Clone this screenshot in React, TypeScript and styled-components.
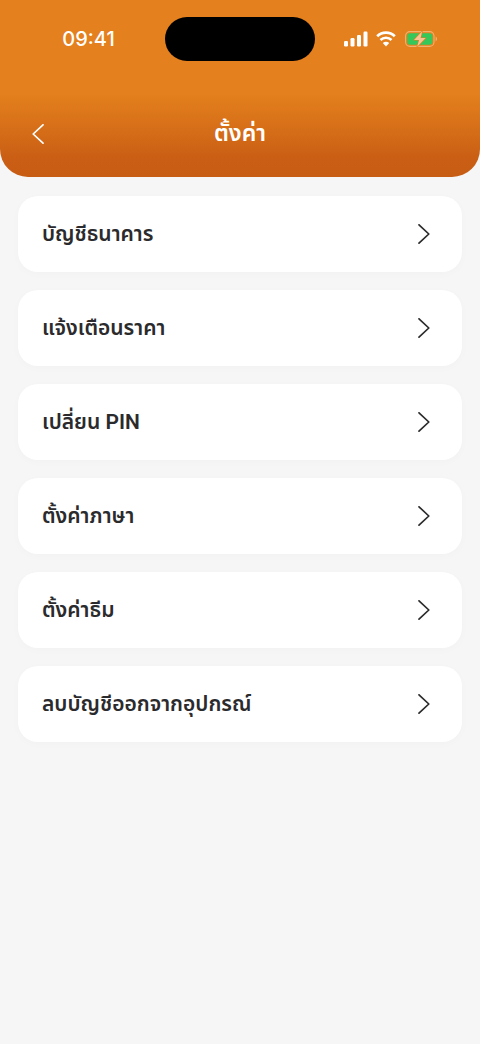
import React from "react";
import styled, { createGlobalStyle } from "styled-components";

const GlobalStyle = createGlobalStyle`
  *, *::before, *::after { box-sizing: border-box; }
  body {
    margin: 0;
    background: #f6f6f6;
    color: #2b2b2d;
    font-family: Roboto, "Noto Sans Thai", "Noto Sans", sans-serif;
    -webkit-font-smoothing: antialiased;
  }
`;

const Header = styled.header`
  padding: 17px 0 15px;
  border-radius: 0 0 28px 28px;
  background: linear-gradient(180deg, #e4801d 0, #e4801d 94px, #c95e14 160px, #c75c13 100%);
  color: #fff;
`;

const StatusBar = styled.div`
  display: grid;
  grid-template-columns: 1fr 150px 1fr;
  align-items: center;
  height: 44px;
`;

const Clock = styled.time`
  padding-left: 12px;
  text-align: center;
  font-family: Inter, sans-serif;
  font-size: 20px;
  font-weight: 500;
  line-height: 24px;
`;

const Island = styled.div`
  height: 44px;
  border-radius: 22px;
  background: #000;
`;

const StatusIcons = styled.div`
  display: flex;
  align-items: center;
  gap: 8px;
  padding-left: 29px;
`;

const NavBar = styled.div`
  display: grid;
  grid-template-columns: 40px 1fr 40px;
  align-items: center;
  margin-top: 45px;
  padding: 0 18px;
  height: 56px;
`;

const BackButton = styled.button`
  display: flex;
  align-items: center;
  justify-content: center;
  width: 40px;
  height: 40px;
  padding: 0;
  border: 0;
  background: none;
  color: inherit;
  cursor: pointer;
`;

const Title = styled.h1`
  margin: 0;
  text-align: center;
  font-size: 23px;
  font-weight: 600;
  line-height: 32px;
`;

const Menu = styled.main`
  display: flex;
  flex-direction: column;
  gap: 18px;
  padding: 19px 18px;
`;

const MenuItem = styled.button`
  display: flex;
  align-items: center;
  justify-content: space-between;
  width: 100%;
  min-height: 76px;
  padding: 0 32px 0 24px;
  border: 0;
  border-radius: 20px;
  background: #fff;
  box-shadow: 0 2px 10px rgba(0, 0, 0, 0.02);
  color: inherit;
  font: inherit;
  font-size: 21px;
  font-weight: 600;
  line-height: 32px;
  text-align: left;
  cursor: pointer;
`;

const items = [
  "บัญชีธนาคาร",
  "แจ้งเตือนราคา",
  "เปลี่ยน PIN",
  "ตั้งค่าภาษา",
  "ตั้งค่าธีม",
  "ลบบัญชีออกจากอุปกรณ์",
];

const Chevron = ({ back = false }: { back?: boolean }) => (
  <svg width="12" height="20" viewBox="0 0 12 20" fill="none" aria-hidden="true">
    <path
      d={back ? "M11 .8 1.2 10 11 19.2" : "M1 .8 10.8 10 1 19.2"}
      stroke="currentColor"
      strokeWidth="1.7"
      strokeLinecap="round"
      strokeLinejoin="round"
    />
  </svg>
);

const Signal = () => (
  <svg width="24" height="16" viewBox="0 0 24 16" fill="#fff" aria-hidden="true">
    <rect x="0" y="10" width="4" height="5.4" rx="1.2" />
    <rect x="6.5" y="7" width="4" height="8.4" rx="1.2" />
    <rect x="13" y="4" width="4" height="11.4" rx="1.2" />
    <rect x="19.5" y=".6" width="4" height="14.8" rx="1.2" />
  </svg>
);

const Wifi = () => (
  <svg width="20" height="16" viewBox="0 0 20 16" fill="none" aria-hidden="true">
    <path d="M1.2 5.3a12.6 12.6 0 0 1 17.6 0" stroke="#fff" strokeWidth="2.8" />
    <path d="M4.5 9a7.8 7.8 0 0 1 11 0" stroke="#fff" strokeWidth="2.6" />
    <path d="M10 15.4 6.8 12.1a4.5 4.5 0 0 1 6.4 0Z" fill="#fff" />
  </svg>
);

const Battery = () => (
  <svg width="34" height="16" viewBox="0 0 34 16" fill="none" aria-hidden="true">
    <rect x="1.6" y=".6" width="28.4" height="14.8" rx="4.4" stroke="#f2b06f" strokeWidth="1.1" />
    <path d="M31.6 5.6c1.9.7 1.9 4.1 0 4.8Z" fill="#f2b06f" />
    <rect x="3.2" y="2.2" width="25.2" height="11.6" rx="3" fill="#35c759" />
    <path
      d="M18.2.2 10.1 9h5l-2 6.8L21.6 7h-5Z"
      fill="#f8c493"
      stroke="#e4801d"
      strokeWidth="1.2"
      strokeLinejoin="round"
      paintOrder="stroke"
    />
  </svg>
);

export default function App() {
  return (
    <>
      <GlobalStyle />
      <Header>
        <StatusBar>
          <Clock>09:41</Clock>
          <Island />
          <StatusIcons>
            <Signal />
            <Wifi />
            <Battery />
          </StatusIcons>
        </StatusBar>
        <NavBar>
          <BackButton type="button" aria-label="ย้อนกลับ">
            <Chevron back />
          </BackButton>
          <Title>ตั้งค่า</Title>
        </NavBar>
      </Header>
      <Menu>
        {items.map((label) => (
          <MenuItem type="button" key={label}>
            {label}
            <Chevron />
          </MenuItem>
        ))}
      </Menu>
    </>
  );
}
